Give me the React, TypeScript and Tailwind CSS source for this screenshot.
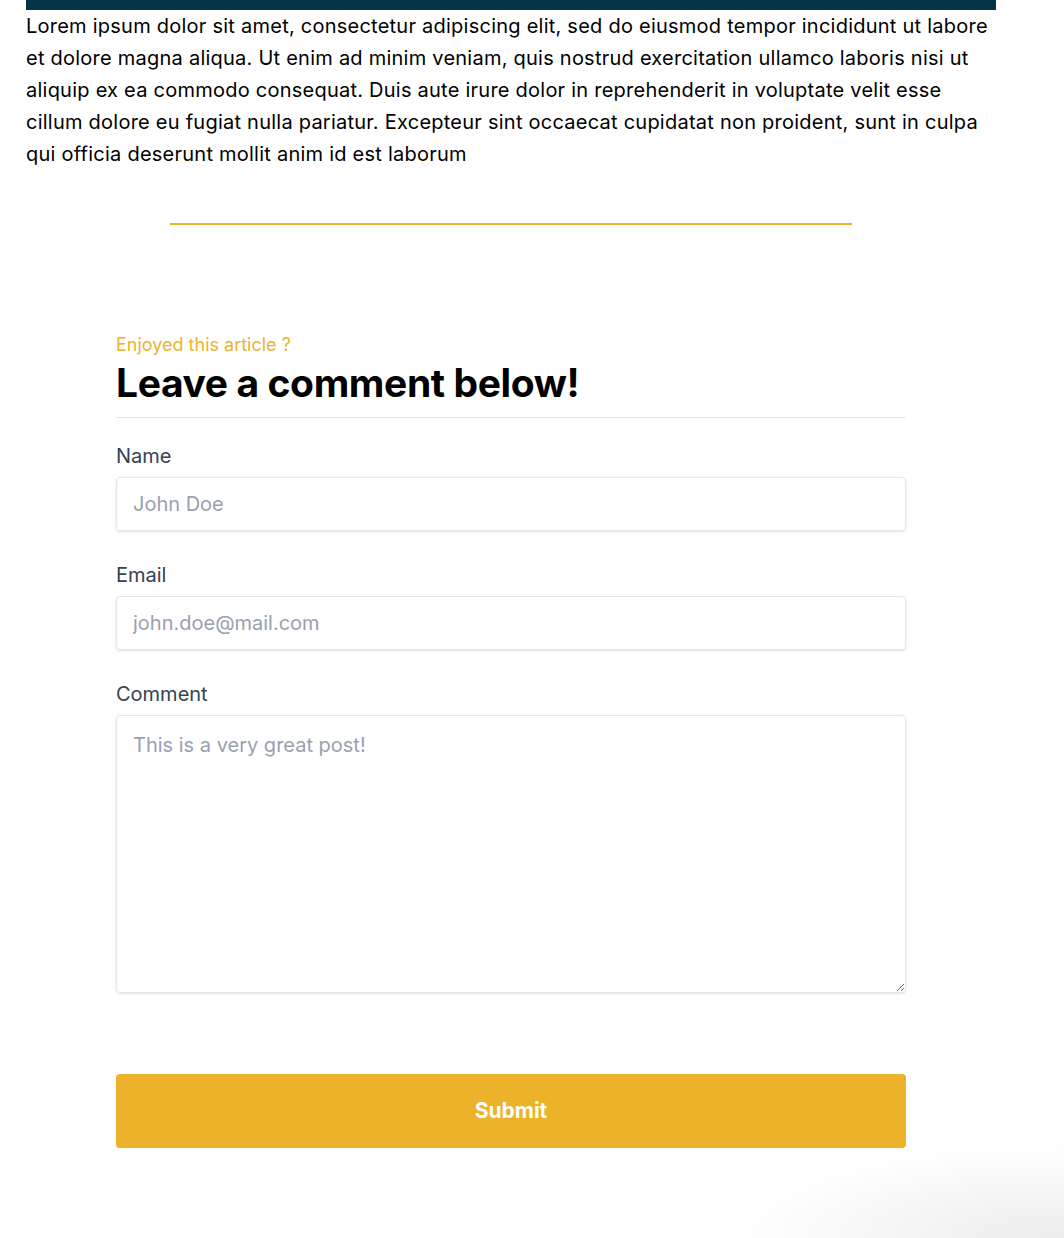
import { useState } from 'react';

export default function App() {
  const [name, setName] = useState('');
  const [email, setEmail] = useState('');
  const [comment, setComment] = useState('');

  return (
    <div className="min-h-[1238px] bg-white bg-[radial-gradient(ellipse_330px_95px_at_100%_100%,#ececec,#ffffff)] font-['Inter','Liberation_Sans',sans-serif]">
      <div className="w-[970px] ml-[26px]">
        <div className="h-[10px] bg-[#033447]" />
        <p className="text-[20px] leading-8 tracking-[0.012em] text-black">
          Lorem ipsum dolor sit amet, consectetur adipiscing elit, sed do eiusmod tempor incididunt ut labore
          et dolore magna aliqua. Ut enim ad minim veniam, quis nostrud exercitation ullamco laboris nisi ut
          aliquip ex ea commodo consequat. Duis aute irure dolor in reprehenderit in voluptate velit esse
          cillum dolore eu fugiat nulla pariatur. Excepteur sint occaecat cupidatat non proident, sunt in culpa
          qui officia deserunt mollit anim id est laborum
        </p>

        <div className="mt-[53px] mx-auto w-[682px] h-[2px] bg-[#ecb32a]" />

        <form className="mt-[108px] mx-auto w-[790px]" onSubmit={(e) => e.preventDefault()}>
          <span className="block text-lg leading-6 text-[#ecb32a]">Enjoyed this article ?</span>
          <h2 className="mt-[6px] pb-[14px] border-b border-gray-200 text-[39px] leading-10 font-bold tracking-[-0.01em] text-black">
            Leave a comment below!
          </h2>

          <label className="block mt-6 text-xl leading-7 text-gray-700">Name</label>
          <input
            value={name}
            onChange={(e) => setName(e.target.value)}
            placeholder="John Doe"
            className="mt-[7px] block w-full h-[54px] px-4 text-xl text-gray-700 placeholder:text-gray-400 border border-gray-200 rounded shadow-sm outline-none"
          />

          <label className="block mt-[30px] text-xl leading-7 text-gray-700">Email</label>
          <input
            value={email}
            onChange={(e) => setEmail(e.target.value)}
            placeholder="john.doe@mail.com"
            className="mt-[7px] block w-full h-[54px] px-4 text-xl text-gray-700 placeholder:text-gray-400 border border-gray-200 rounded shadow-sm outline-none"
          />

          <label className="block mt-[30px] text-xl leading-7 text-gray-700">Comment</label>
          <textarea
            value={comment}
            onChange={(e) => setComment(e.target.value)}
            placeholder="This is a very great post!"
            className="mt-[7px] block w-full h-[278px] px-4 py-[15px] text-xl leading-7 text-gray-700 placeholder:text-gray-400 border border-gray-200 rounded shadow-sm outline-none"
          />

          <button
            type="submit"
            className="mt-[81px] w-full h-[74px] rounded bg-[#ecb32a] text-white text-[21px] font-bold"
          >
            Submit
          </button>
        </form>
      </div>
    </div>
  );
}
